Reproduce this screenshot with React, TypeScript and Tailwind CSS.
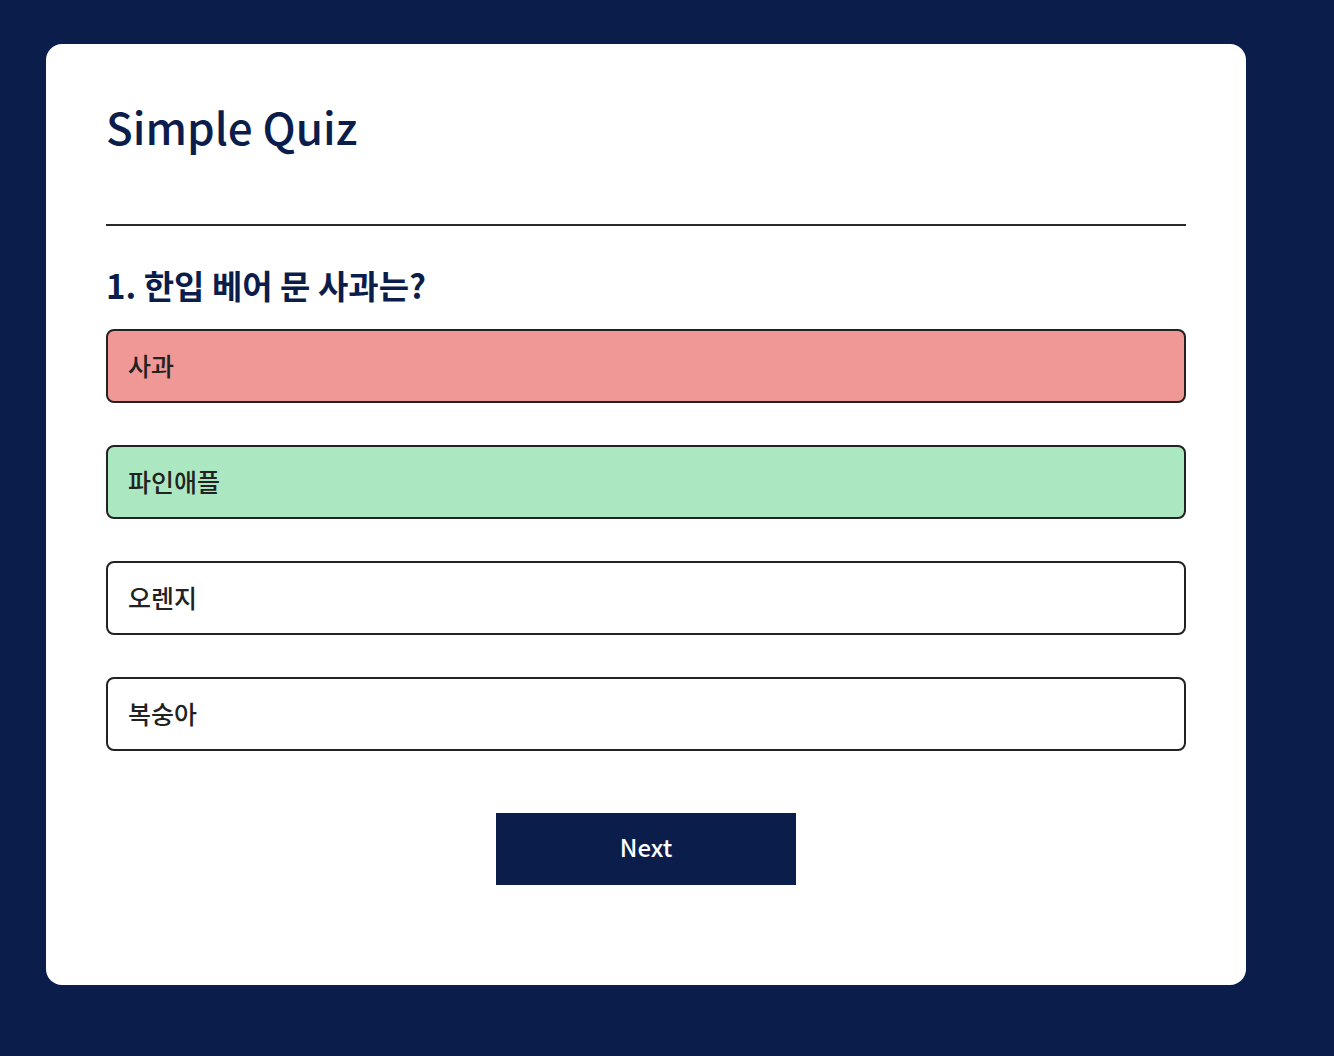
import { useState } from "react";

const options = ["사과", "파인애플", "오렌지", "복숭아"];

export default function App() {
  const [selected] = useState(0);
  const answer = 1;

  return (
    <div
      className="min-h-screen bg-[#0b1e4b] pt-[44px] pl-[46px]"
      style={{ fontFamily: '"Noto Sans CJK KR", "Noto Sans", sans-serif' }}
    >
      <div className="w-[1200px] h-[941px] bg-white rounded-2xl px-[60px] pt-[52px]">
        <h1 className="text-[44px] leading-[60px] font-medium text-[#0b1e4b]">Simple Quiz</h1>
        <hr className="mt-[68px] border-t-2 border-[#2a2a2a]" />
        <h2 className="mt-[38px] text-[33px] leading-[42px] font-bold text-[#0b1e4b]">
          1. 한입 베어 문 사과는?
        </h2>
        <ul className="mt-[23px] flex flex-col gap-[42px]">
          {options.map((opt, i) => (
            <li key={opt}>
              <button
                className={`w-full h-[74px] text-left px-[20px] border-2 border-[#222] rounded-lg text-[25px] font-medium text-[#222] ${
                  i === answer ? "bg-[#abe8c1]" : i === selected ? "bg-[#f09896]" : "bg-white"
                }`}
              >
                {opt}
              </button>
            </li>
          ))}
        </ul>
        <div className="mt-[62px] flex justify-center">
          <button className="w-[300px] h-[72px] bg-[#0b1e4b] text-white text-[24px] font-medium">
            <span className="relative -top-[2px]">Next</span>
          </button>
        </div>
      </div>
    </div>
  );
}
